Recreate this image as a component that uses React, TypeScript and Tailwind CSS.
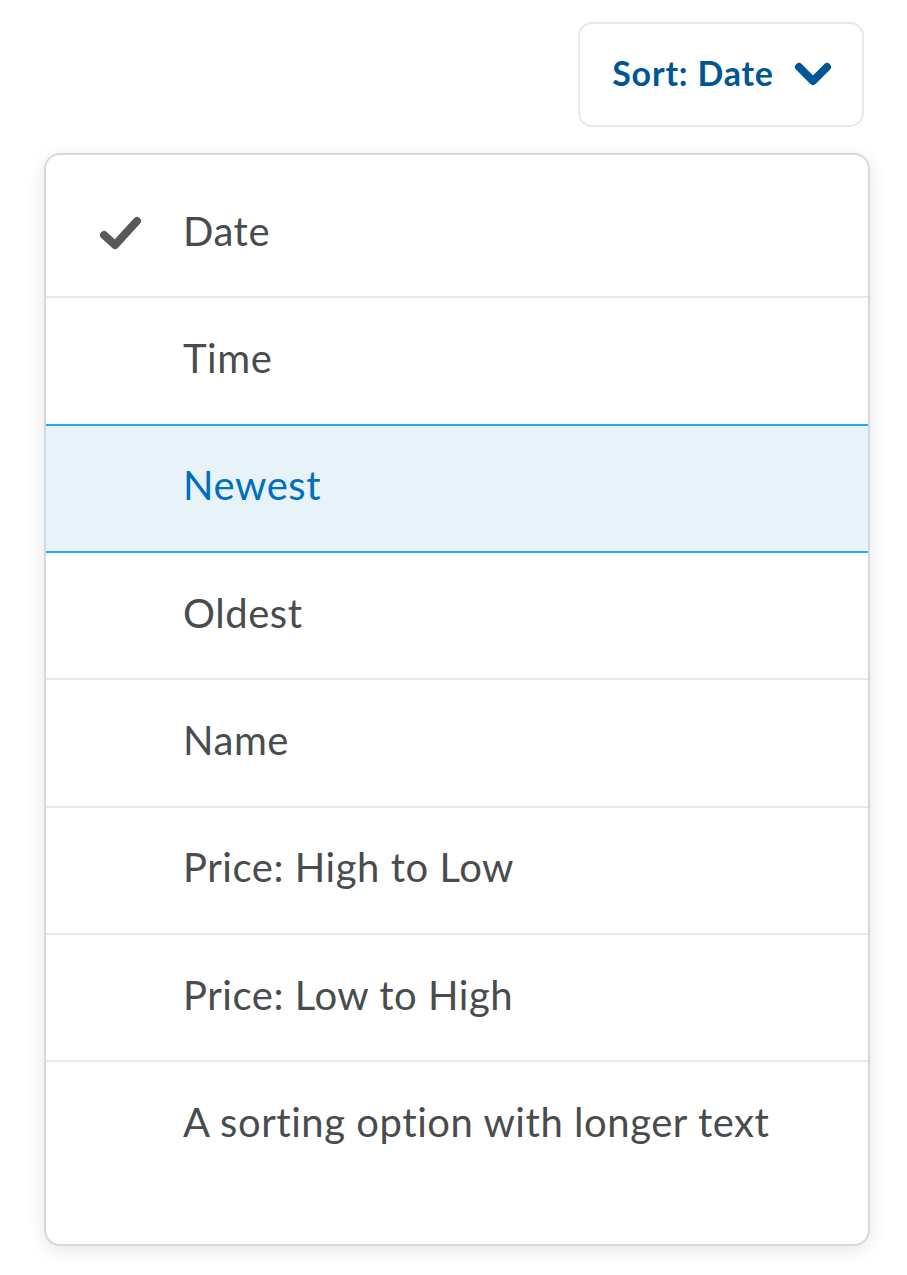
import React from "react";

const items = [
  "Date",
  "Time",
  "Newest",
  "Oldest",
  "Name",
  "Price: High to Low",
  "Price: Low to High",
  "A sorting option with longer text",
];

export default function App() {
  return (
    <div className="min-h-[1275px] w-[907px] bg-white" style={{ fontFamily: "Lato, 'Noto Sans', sans-serif" }}>
      <div className="flex justify-end pr-[43px] pt-[22px]">
        <button className="flex h-[105px] w-[286px] items-center justify-center gap-[20px] rounded-[14px] border-2 border-[#e3e9f1] bg-white pl-[2px]">
          <span className="mb-[4px] text-[34px] font-bold leading-none tracking-[0.8px] text-[#005694]">Sort: Date</span>
          <svg width="38" height="24" viewBox="0 0 38 24" className="mb-[1px]">
            <path d="M5 5 L19 19 L33 5" fill="none" stroke="#005694" strokeWidth="8" strokeLinecap="round" strokeLinejoin="round" />
          </svg>
        </button>
      </div>
      <div className="ml-[44px] mt-[26px] w-[826px] overflow-hidden rounded-[16px] border-2 border-[#d3d9e3] bg-white shadow-[0_4px_18px_rgba(0,0,0,0.10)]">
        <div className="pt-[16px] pb-[54px]">
          {items.map((t, i) => {
            const hl = i === 2;
            const last = i === items.length - 1;
            const borderCls =
              i === 1 || hl
                ? "border-[#29a6ff]"
                : last
                ? "border-transparent"
                : "border-[#e3e9f1]";
            return (
              <div
                key={t}
                className={
                  "flex h-[127.33px] items-center border-b-2 " +
                  borderCls +
                  (hl ? " bg-[#e8f2f9]" : "")
                }
              >
                <div className="flex w-[137px] shrink-0 items-center justify-center pl-[12px] pb-[4px]">
                  {i === 0 && (
                    <svg width="46" height="36" viewBox="0 0 46 36">
                      <path d="M6 21 L17 31 L39 7" fill="none" stroke="#565a5c" strokeWidth="8" strokeLinecap="round" strokeLinejoin="round" />
                    </svg>
                  )}
                </div>
                <span className={"mb-[6px] text-[40px] leading-none tracking-[0.55px] " + (hl ? "text-[#006fbf]" : "text-[#494c4e]")}>{t}</span>
              </div>
            );
          })}
        </div>
      </div>
    </div>
  );
}
